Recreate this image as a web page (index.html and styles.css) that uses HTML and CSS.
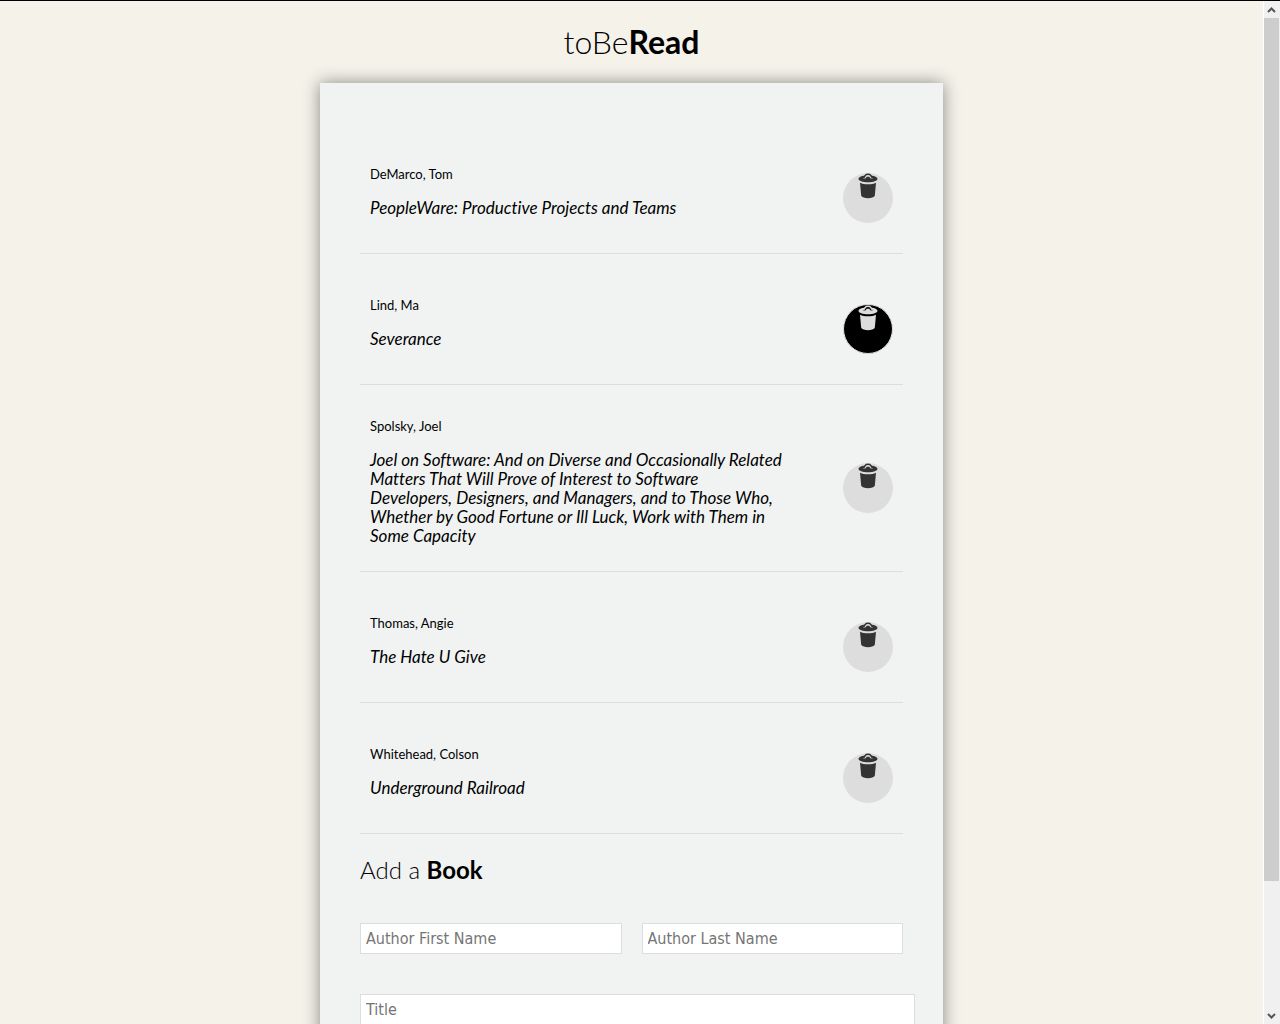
FILE: index.html
```html
<!DOCTYPE html>
<html lang="en">
<head>
<meta charset="utf-8">
<title>toBeRead</title>
<link rel="stylesheet" href="styles.css">
</head>
<body>
<svg class="defs" aria-hidden="true">
  <symbol id="bin" viewBox="0 0 20 26">
    <path fill="none" stroke="currentColor" stroke-width="1.500" d="M5.500 5 7.500 2.200Q8 1.200 10 1.200T12.500 2.200L14.500 5"/>
    <path fill="currentColor" d="M7 2.400C3.500 2.900.5 4.200.5 5.800.5 7.900 4.800 9.300 10 9.300S19.500 7.900 19.500 5.800C19.500 4.200 16.500 2.900 13 2.400L14.800 5.600 12.700 5.600 11.200 3.800 8.800 3.800 7.300 5.600 5.200 5.600Z"/>
    <path fill="currentColor" d="M2 9.700C6 11.900 14 11.900 18 9.700L16.800 22.800C15.500 26 4.500 26 3.200 22.800Z"/>
  </symbol>
</svg>
<div class="window">
  <div class="page">
    <header class="header">
      <h1 class="logo">toBe<b>Read</b></h1>
    </header>
    <main class="panel">
      <ul class="books">
        <li class="book">
          <div class="details"><p class="author">DeMarco, Tom</p><p class="title">PeopleWare: Productive Projects and Teams</p></div>
          <button class="remove" type="button" aria-label="Remove book"><svg class="bin"><use href="#bin"/></svg></button>
        </li>
        <li class="book">
          <div class="details"><p class="author">Lind, Ma</p><p class="title">Severance</p></div>
          <button class="remove active" type="button" aria-label="Remove book"><svg class="bin"><use href="#bin"/></svg></button>
        </li>
        <li class="book">
          <div class="details"><p class="author">Spolsky, Joel</p><p class="title">Joel on Software: And on Diverse and Occasionally Related Matters That Will Prove of Interest to Software Developers, Designers, and Managers, and to Those Who, Whether by Good Fortune or Ill Luck, Work with Them in Some Capacity</p></div>
          <button class="remove" type="button" aria-label="Remove book"><svg class="bin"><use href="#bin"/></svg></button>
        </li>
        <li class="book">
          <div class="details"><p class="author">Thomas, Angie</p><p class="title">The Hate U Give</p></div>
          <button class="remove" type="button" aria-label="Remove book"><svg class="bin"><use href="#bin"/></svg></button>
        </li>
        <li class="book">
          <div class="details"><p class="author">Whitehead, Colson</p><p class="title">Underground Railroad</p></div>
          <button class="remove" type="button" aria-label="Remove book"><svg class="bin"><use href="#bin"/></svg></button>
        </li>
      </ul>
      <h2 class="subhead">Add a <b>Book</b></h2>
      <form class="form">
        <div class="names">
          <input class="field" type="text" placeholder="Author First Name" aria-label="Author First Name">
          <input class="field" type="text" placeholder="Author Last Name" aria-label="Author Last Name">
        </div>
        <input class="field wide" type="text" placeholder="Title" aria-label="Title">
      </form>
    </main>
  </div>
  <div class="scrollbar" aria-hidden="true">
    <svg class="arrow" viewBox="0 0 15 17"><path d="M4 11 7.500 7.500 11 11"/></svg>
    <div class="track"><div class="thumb"></div></div>
    <svg class="arrow" viewBox="0 0 15 17"><path d="M4 7 7.500 10.500 11 7"/></svg>
  </div>
</div>
</body>
</html>
```

FILE: styles.css
```css
* { box-sizing: border-box; }

body {
  margin: 0;
  background: #f5f2ea;
  color: #000;
  font-family: Lato, sans-serif;
  font-size: 16px;
}

h1, h2, p, ul { margin: 0; padding: 0; font-weight: 300; }

.defs { display: none; }

.window {
  display: flex;
  height: 100vh;
  overflow: hidden;
  border-top: 1px solid #000;
}

.page { flex: 1; overflow: hidden; }

.header { padding: 22px 0; text-align: center; }

.logo { font-size: 32px; line-height: 38px; }

.logo b, .subhead b { font-weight: 700; }

.panel {
  margin: 0 25vw;
  padding: 40px;
  background: #f0f3f2;
  box-shadow: 0 0 16px #888880;
}

.books { list-style: none; }

.book {
  display: flex;
  align-items: center;
  padding: 33px 10px 26px;
  border-bottom: 1px solid #ddd;
}

.details { flex: 1; }

.author {
  margin-bottom: 16px;
  font-size: 13px;
  line-height: 16px;
  font-weight: 400;
}

.title {
  font-size: 17px;
  line-height: 19px;
  font-style: italic;
  font-weight: 400;
  font-variant-ligatures: none;
}

.remove {
  display: flex;
  justify-content: center;
  width: 50px;
  height: 50px;
  margin: 17px 0 4px 60px;
  padding: 0;
  border: 0;
  border-radius: 50%;
  background: #ddd;
  color: #333;
}

.remove.active {
  border: 1px solid #ddd;
  background: #000;
  color: #ddd;
}

.bin { width: 20px; height: 26px; }

.subhead {
  margin: 21px 0 39px;
  font-size: 24px;
  line-height: 29px;
}

.form { display: grid; gap: 40px; }

.names {
  display: grid;
  grid-template-columns: 1fr 1fr;
  gap: 20px;
}

.field {
  width: 100%;
  height: 31px;
  padding: 0 5px;
  border: 1px solid #ddd;
  background: #fff;
  font-family: "DejaVu Sans Condensed", "DejaVu Sans", sans-serif;
  font-size: 16px;
}

.field::placeholder { color: #757575; }

.wide { width: calc(100% + 12px); }

.scrollbar {
  display: flex;
  flex-direction: column;
  width: 17px;
  padding-right: 1px;
  border-left: 1px solid #fff;
  background: #f0f0f0;
}

.arrow {
  height: 17px;
  fill: none;
  stroke: #555;
  stroke-width: 2;
}

.track { flex: 1; }

.thumb { height: 87.3%; background: #cdcdcd; }
```
